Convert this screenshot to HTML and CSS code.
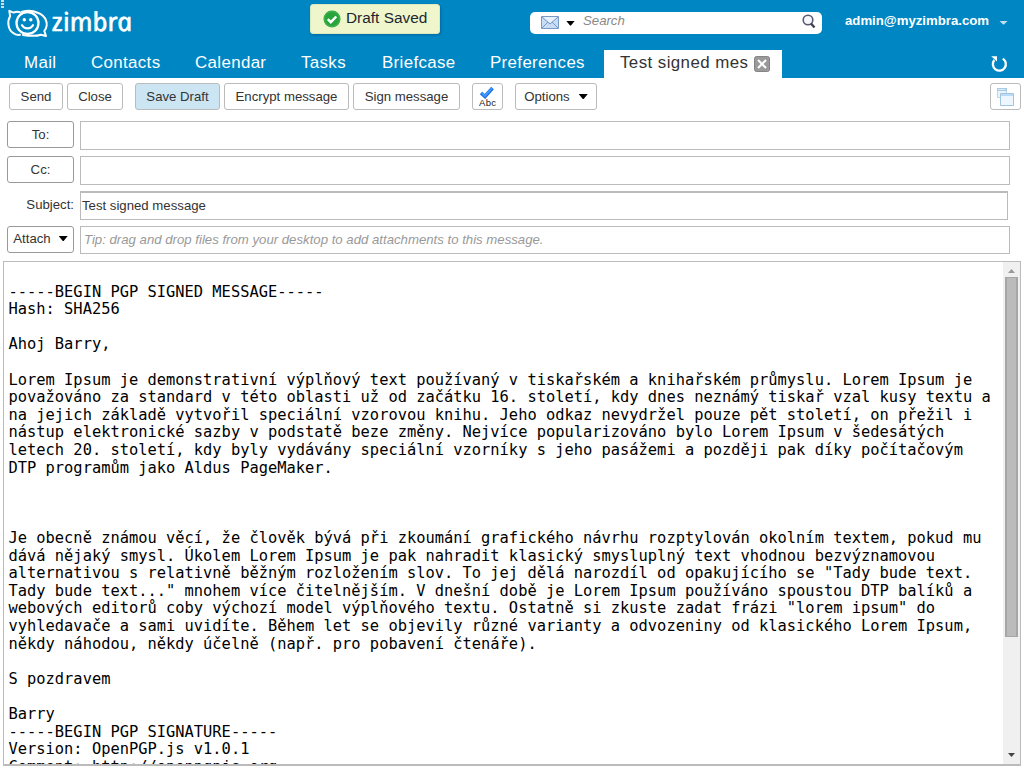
FILE: index.html
```html
<!DOCTYPE html>
<html lang="cs">
<head>
<meta charset="utf-8">
<title>Zimbra: Compose</title>
<link rel="stylesheet" href="styles.css">
</head>
<body>
<header class="masthead">
  <div class="banner">
    <span class="grip"></span>
    <svg class="logo" width="132" height="40" viewBox="0 0 132 40">
      <g fill="none" stroke="#fff" stroke-linecap="round" stroke-linejoin="round">
        <circle cx="27.500" cy="23" r="11" stroke-width="2.300"/>
        <path d="M20 12.200c-2.500-.6-4.500-.4-6.500.4L9.300 10.800l.8 5.500C7.200 21 7.500 30 14 33.500c2 1.300 4 1.600 6 1.300" stroke-width="2"/>
        <path d="M22 11.700c5-1.200 11-1.200 15 .8C47 16 49 25 44.300 31l1.700 5-5-1.300c-4 1.300-12 1.300-18 .2" stroke-width="2"/>
        <path d="M22 25.200c2.400 4.200 8.600 4.200 11 0" stroke-width="2.200"/>
      </g>
      <circle cx="24.300" cy="19.800" r="1.700" fill="#fff"/><circle cx="30.800" cy="19.800" r="1.700" fill="#fff"/>
      <text class="wordmark" x="53" y="31" textLength="80.500" lengthAdjust="spacingAndGlyphs" transform="translate(-6.600 0) skewX(12)">zimbra</text>
    </svg>
    <div class="toast">
      <svg width="18" height="18" viewBox="0 0 18 18"><circle cx="9" cy="9" r="8.500" fill="#27a43a"/><circle cx="9" cy="9" r="7.500" fill="none" stroke="#45b354"/><path d="M4.800 9.200l3 3L13.300 6.500" fill="none" stroke="#fff" stroke-width="2.500"/></svg>
      <span>Draft Saved</span>
    </div>
    <div class="search">
      <svg width="18" height="13" viewBox="0 0 18 13"><path d="M.5.5h17v12H.5z" fill="#c8dcf5" stroke="#7899c4"/><path d="M1 12l6-6M17 12l-6-6M1 1l8 7 8-7" fill="none" stroke="#7899c4"/><path d="M2 1h14L9 7z" fill="#e9f2fc"/></svg>
      <i class="caret"></i>
      <span class="hint">Search</span>
      <svg class="glass" width="14" height="15" viewBox="0 0 14 15"><circle cx="6" cy="6" r="4.800" fill="#f4f6fa" stroke="#555b70" stroke-width="1.600"/><path d="M9 9.500l3.500 4" stroke="#454050" stroke-width="2.400"/></svg>
    </div>
    <div class="account">admin@myzimbra.com<i class="caret pale"></i></div>
  </div>
  <nav class="tabs">
    <span class="t-mail">Mail</span><span class="t-contacts">Contacts</span><span class="t-calendar">Calendar</span><span class="t-tasks">Tasks</span><span class="t-briefcase">Briefcase</span><span class="t-preferences">Preferences</span>
    <div class="active">Test signed mes<svg width="16" height="16" viewBox="0 0 16 16"><rect x=".5" y=".5" width="15" height="15" rx="2" fill="#999" stroke="#858585"/><path d="M4 4l8 8M12 4l-8 8" stroke="#fff" stroke-width="2"/></svg></div>
    <svg class="refresh" width="18" height="18" viewBox="0 0 18 18"><path d="M12.800 3.600A6.500 6.500 0 1 1 4.300 5" fill="none" stroke="#fff" stroke-width="2.300"/><path d="M1.200 1.300H7V6.500z" fill="#fff"/></svg>
  </nav>
</header>
<div class="toolbar">
  <button class="btn send">Send</button>
  <button class="btn close">Close</button>
  <button class="btn save">Save Draft</button>
  <button class="btn encrypt">Encrypt message</button>
  <button class="btn sign">Sign message</button>
  <button class="btn spell"><svg width="18" height="20" viewBox="0 0 18 20"><path d="M2 6l4 3.500L13.500 1" fill="none" stroke="#1769dc" stroke-width="3.600"/><path d="M2.500 6L6 9l7-8" fill="none" stroke="#3c98ff" stroke-width="2"/><text x="0" y="19.300" textLength="17" class="abc">Abc</text></svg></button>
  <button class="btn options">Options<i class="caret"></i></button>
  <button class="btn detach"><svg width="18" height="18" viewBox="0 0 18 18"><path d="M.5.500h9v9h-9z" fill="#eaf4fb" stroke="#b9d6ea"/><path d="M0 0h10v3H0z" fill="#a9cbe4"/><path d="M1 1h7v1H1z" fill="#d8ebfa"/><path d="M3.500 5.500h13v12h-13z" fill="#edf6fc" stroke="#a3c4dd"/><path d="M4 6h12v2H4z" fill="#bbdaf6"/></svg></button>
</div>
<main class="form">
  <div class="row"><button class="btn addr">To:</button><div class="field"></div></div>
  <div class="row"><button class="btn addr">Cc:</button><div class="field"></div></div>
  <div class="row"><label class="label">Subject:</label><div class="field subject">Test signed message</div></div>
  <div class="row"><button class="btn attach">Attach<i class="caret"></i></button><div class="field tip">Tip: drag and drop files from your desktop to add attachments to this message.</div></div>
</main>
<section class="editor">
<pre class="message">
-----BEGIN PGP SIGNED MESSAGE-----
Hash: SHA256

Ahoj Barry,

Lorem Ipsum je demonstrativní výplňový text používaný v tiskařském a knihařském průmyslu. Lorem Ipsum je
považováno za standard v této oblasti už od začátku 16. století, kdy dnes neznámý tiskař vzal kusy textu a
na jejich základě vytvořil speciální vzorovou knihu. Jeho odkaz nevydržel pouze pět století, on přežil i
nástup elektronické sazby v podstatě beze změny. Nejvíce popularizováno bylo Lorem Ipsum v šedesátých
letech 20. století, kdy byly vydávány speciální vzorníky s jeho pasážemi a později pak díky počítačovým
DTP programům jako Aldus PageMaker.



Je obecně známou věcí, že člověk bývá při zkoumání grafického návrhu rozptylován okolním textem, pokud mu
dává nějaký smysl. Úkolem Lorem Ipsum je pak nahradit klasický smysluplný text vhodnou bezvýznamovou
alternativou s relativně běžným rozložením slov. To jej dělá narozdíl od opakujícího se "Tady bude text.
Tady bude text..." mnohem více čitelnějším. V dnešní době je Lorem Ipsum používáno spoustou DTP balíků a
webových editorů coby výchozí model výplňového textu. Ostatně si zkuste zadat frázi "lorem ipsum" do
vyhledavače a sami uvidíte. Během let se objevily různé varianty a odvozeniny od klasického Lorem Ipsum,
někdy náhodou, někdy účelně (např. pro pobavení čtenáře).

S pozdravem

Barry
-----BEGIN PGP SIGNATURE-----
Version: OpenPGP.js v1.0.1
Comment: http://openpgpjs.org</pre>
  <div class="scrollbar"><i class="arrow up"></i><div class="thumb"></div><i class="arrow down"></i></div>
</section>
</body>
</html>
```
FILE: styles.css
```css
* { box-sizing: border-box; }
body { margin: 0; width: 1024px; height: 768px; overflow: hidden; display: flex; flex-direction: column; background: #fff; color: #333; font: 13.200px "Liberation Sans", Arial, sans-serif; }
svg { display: block; flex: none; }
.masthead { height: 78px; flex: none; background: #0087c3; }
.banner { position: relative; height: 50px; display: flex; align-items: flex-start; }
.grip { position: absolute; left: 1px; top: 0; width: 3px; height: 8px; background: repeating-linear-gradient(#cbdde5 0 2px, #46788e 2px 3px); }
.logo { overflow: visible; }
.wordmark { font: italic 400 26px "Noto Sans", sans-serif; fill: #fff; stroke: #fff; stroke-width: .6px; }
.toast { margin: 4px 0 0 178px; width: 130px; height: 30px; padding-left: 12px; display: flex; align-items: center; gap: 5px; background: #eff6cb; border: 1px solid #dce9ba; border-radius: 3px; box-shadow: 1px 1px 3px #0067a0; font-size: 15.400px; color: #1d2630; }
.toast span { margin-top: -3px; white-space: nowrap; }
.search { width: 292px; height: 22px; margin: 12px 0 0 90px; padding: 0 6px 0 11px; display: flex; align-items: center; background: #fff; border-radius: 5px; }
.caret { display: block; flex: none; width: 9px; height: 5px; background: #000; clip-path: polygon(0 0, 100% 0, 55% 100%, 45% 100%); }
.search .caret { margin-left: 7px; }
.search > svg:first-child { margin-top: -1px; }
.hint { flex: 1; margin: -5px 0 0 8px; font-style: italic; color: #888; }
.glass { margin-top: -4px; }
.account { display: flex; align-items: center; margin: 13px 0 0 23px; font-weight: bold; font-size: 13.200px; color: #fff; white-space: nowrap; }
.caret.pale { height: 4px; margin: 4px 0 0 10px; background: #bfe0f1; }
.tabs { height: 28px; display: flex; font-size: 16.900px; line-height: 25px; color: #fff; letter-spacing: .35px; }
.tabs span { flex: none; white-space: nowrap; }
.t-mail { width: 67px; margin-left: 24px; }
.t-contacts { width: 104px; }
.t-calendar { width: 106px; }
.t-tasks { width: 81px; }
.t-briefcase { width: 108px; }
.t-preferences { width: 114px; }
.active { width: 178px; padding-left: 16px; display: flex; background: #fff; color: #333; white-space: nowrap; letter-spacing: .42px; }
.active svg { margin: 6px 0 0 6px; }
.refresh { margin: 5px 0 0 208px; }
.toolbar { flex: none; height: 43px; padding: 5px 3px 0 9px; display: flex; align-items: flex-start; }
.btn { flex: none; height: 27px; margin: 0; padding: 0; display: flex; align-items: center; justify-content: center; border: 1px solid #bbb; border-radius: 3px; background: #fff; font: 13.200px "Liberation Sans", Arial, sans-serif; color: #333; white-space: nowrap; }
.send { width: 54px; margin-right: 4px; }
.close { width: 56px; margin-right: 12px; }
.save { width: 85px; margin-right: 4px; background: #cce5f3; }
.encrypt { width: 125px; margin-right: 4px; }
.sign { width: 107px; margin-right: 12px; }
.spell { width: 31px; margin-right: 12px; }
.abc { font: 9.500px "Liberation Sans", sans-serif; fill: #222; }
.options { width: 82px; gap: 9px; }
.detach { width: 31px; margin-left: auto; }
.form { flex: none; height: 140px; }
.row { height: 35px; padding-left: 7px; display: flex; align-items: flex-start; }
.addr { width: 67px; margin-right: 6px; border-color: #999; }
.field { width: 930px; height: 29px; border: 1px solid #bbb; line-height: 27px; white-space: nowrap; }
.label { width: 67px; margin-right: 6px; line-height: 28px; text-align: right; }
.subject { width: 928px; border-top-width: 2px; padding-left: 1px; line-height: 25px; }
.attach { width: 67px; margin-right: 6px; padding-bottom: 2px; border-color: #999; gap: 8px; }
.tip { height: 28px; padding-left: 3px; line-height: 25px; font-style: italic; color: #999; }
.editor { width: 1018px; height: 505px; flex: none; margin: 0 0 0 3px; display: flex; border: 1px solid #bbb; border-bottom-width: 2px; overflow: hidden; }
.message { flex: 1; margin: 0; padding: 21.700px 0 0 4.500px; font: 15.400px/17.600px "DejaVu Sans Mono", monospace; color: #000; white-space: pre; overflow: hidden; }
.scrollbar { width: 17px; flex: none; padding: 7px 0; display: flex; flex-direction: column; align-items: center; background: #f0f0f0; }
.thumb { width: 13px; height: 360px; margin-top: 4px; background: #bbb; border: 1px solid #a6a6a6; border-width: 1px 2px; }
.arrow { width: 7px; height: 4px; background: #999; clip-path: polygon(50% 0, 100% 100%, 0 100%); }
.down { margin-top: auto; background: #444; clip-path: polygon(0 0, 100% 0, 50% 100%); }
```
